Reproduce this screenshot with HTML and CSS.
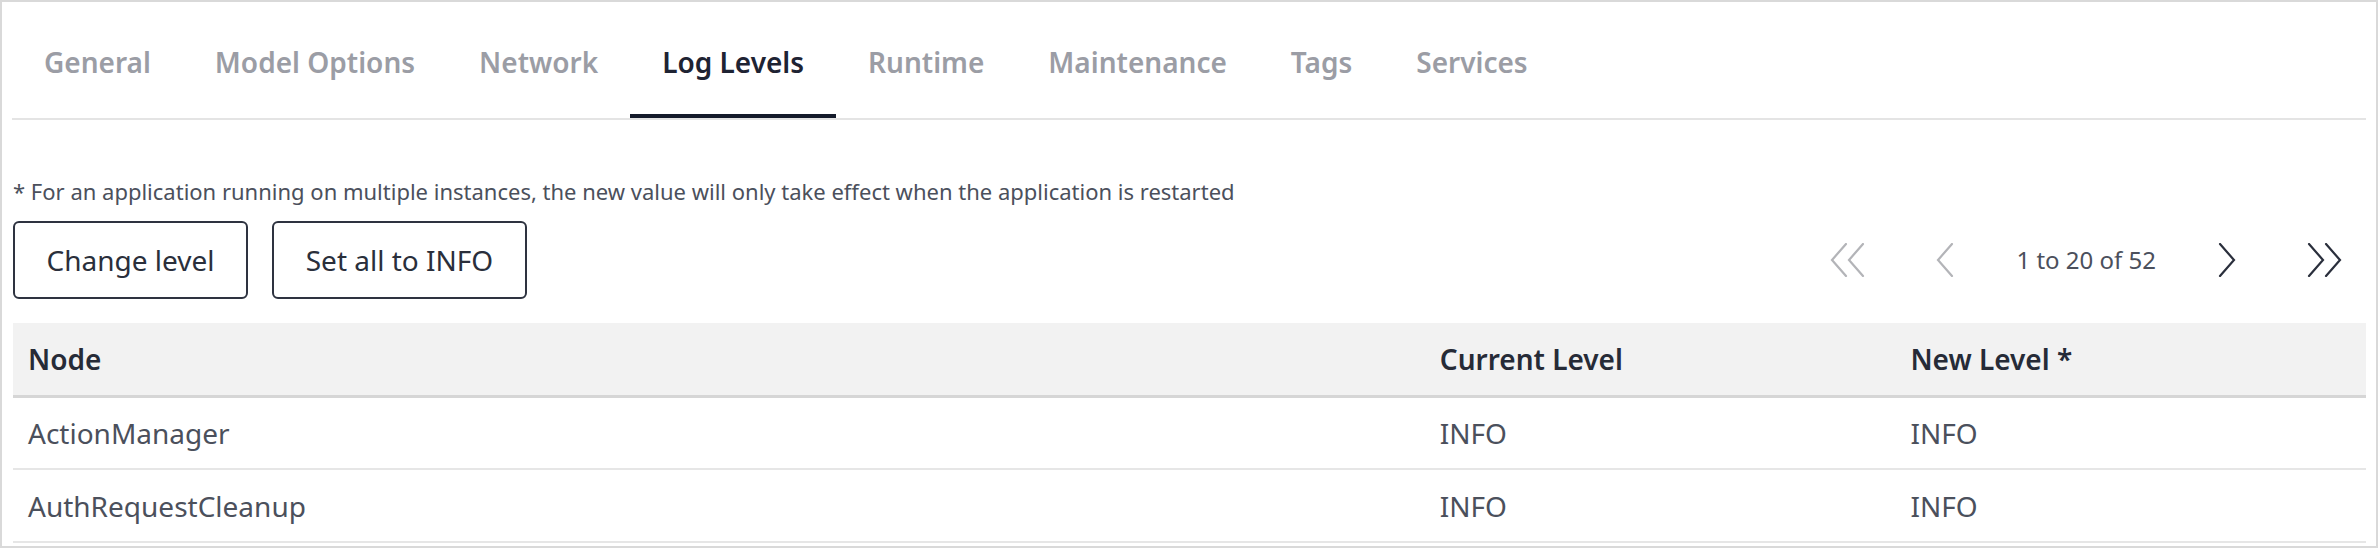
FILE: index.html
```html
<!DOCTYPE html>
<html lang="en">
<head>
<meta charset="utf-8">
<title>Log Levels</title>
<link rel="stylesheet" href="styles.css">
</head>
<body>
<div class="frame">
  <nav class="tabs">
    <a class="tab">General</a>
    <a class="tab">Model Options</a>
    <a class="tab">Network</a>
    <a class="tab active">Log Levels</a>
    <a class="tab">Runtime</a>
    <a class="tab">Maintenance</a>
    <a class="tab">Tags</a>
    <a class="tab">Services</a>
  </nav>
  <div class="content">
    <p class="note">* For an application running on multiple instances, the new value will only take effect when the application is restarted</p>
    <div class="toolbar">
      <div class="actions">
        <button class="btn">Change level</button>
        <button class="btn">Set all to INFO</button>
      </div>
      <div class="pager">
        <span class="pg disabled"><svg width="36" height="34" viewBox="0 0 36 34"><path d="M17 1 L3 17 L17 33 M34 1 L20 17 L34 33"/></svg></span>
        <span class="pg disabled"><svg width="18" height="34" viewBox="0 0 18 34"><path d="M16 1 L2 17 L16 33"/></svg></span>
        <span class="pg-text">1 to 20 of 52</span>
        <span class="pg"><svg width="18" height="34" viewBox="0 0 18 34"><path d="M2 1 L16 17 L2 33"/></svg></span>
        <span class="pg"><svg width="36" height="34" viewBox="0 0 36 34"><path d="M2 1 L16 17 L2 33 M19 1 L33 17 L19 33"/></svg></span>
      </div>
    </div>
    <table class="grid">
      <thead>
        <tr><th class="c1">Node</th><th class="c2">Current Level</th><th class="c3">New Level *</th></tr>
      </thead>
      <tbody>
        <tr><td>ActionManager</td><td>INFO</td><td>INFO</td></tr>
        <tr><td>AuthRequestCleanup</td><td>INFO</td><td>INFO</td></tr>
      </tbody>
    </table>
  </div>
</div>
</body>
</html>
```
FILE: styles.css
```css
* { box-sizing: border-box; }
html, body { margin: 0; padding: 0; background: #fff; }
body { font-family: "Noto Sans", "Open Sans", sans-serif; color: #4b505c; }
.frame {
  width: 2378px;
  height: 548px;
  border: 2px solid #d9d9d9;
  padding: 0 10px 0 11px;
  overflow: hidden;
}
.tabs {
  display: flex;
  padding-top: 42px;
  border-bottom: 2px solid #e4e4e4;
  margin-left: -1px;
}
.tab {
  font-size: 28px;
  font-weight: 600;
  line-height: 36px;
  color: #9b9da5;
  padding: 0 32px 34px;
  border-bottom: 4px solid transparent;
  white-space: nowrap;
}
.tab.active { color: #1e2333; border-bottom-color: #141a2a; }
.content { padding-top: 56px; }
.note {
  margin: 0;
  font-size: 22px;
  line-height: 30px;
  color: #4b505c;
}
.toolbar {
  margin-top: 15px;
  display: flex;
  justify-content: space-between;
  align-items: center;
}
.actions { display: flex; gap: 24px; }
.btn {
  font-family: inherit;
  font-size: 28px;
  line-height: 36px;
  color: #2a2f3b;
  background: #fff;
  border: 2px solid #2e3340;
  border-radius: 6px;
  padding: 19px 30px;
  margin: 0;
}
.btn:first-child { width: 235px; }
.btn:last-child { width: 255px; }
.pager {
  display: flex;
  align-items: center;
  gap: 38px;
  margin-right: 11px;
}
.pg {
  width: 60px;
  height: 40px;
  display: flex;
  align-items: center;
  justify-content: center;
}
.pg svg path { fill: none; stroke: #2a2f3c; stroke-width: 2.2; stroke-linecap: round; stroke-linejoin: miter; }
.pg.disabled svg path { stroke: #b3b4b8; }
.pg-text { font-size: 24px; line-height: 36px; color: #4b505c; margin: 0 3px; white-space: nowrap; }
.grid {
  margin-top: 24px;
  width: 100%;
  border-collapse: collapse;
  table-layout: fixed;
}
.grid th, .grid td {
  text-align: left;
  padding: 0 15px;
  font-size: 28px;
  line-height: 36px;
}
.grid th {
  background: #f2f2f2;
  color: #262b37;
  font-weight: 600;
  height: 73px;
  border-bottom: 3px solid #d6d6d6;
}
.grid td {
  height: 73px;
  color: #4b505c;
  border-bottom: 2px solid #e6e6e6;
}
.c1 { width: 60%; }
.c2 { width: 20%; }
.c3 { width: 20%; }
```
